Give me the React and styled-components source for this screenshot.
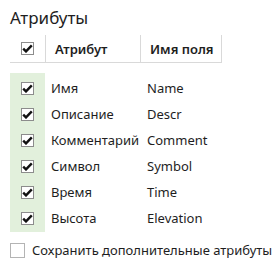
import React from "react";
import styled, { createGlobalStyle } from "styled-components";

const GlobalStyle = createGlobalStyle`
  body {
    margin: 0;
    background: #fff;
    font-family: "Noto Sans", "Open Sans", sans-serif;
    color: #1e1e1e;
  }
`;

const Panel = styled.div`
  width: 275px;
  height: 266px;
  padding: 0 10px;
  box-sizing: border-box;
`;

const Title = styled.h1`
  margin: 0;
  padding-top: 7px;
  height: 35px;
  box-sizing: border-box;
  font-size: 17px;
  font-weight: 400;
  line-height: 22px;
`;

const Grid = styled.div`
  display: grid;
  grid-template-columns: 35px 95px 82px;
`;

const HeadCell = styled.div`
  height: 27px;
  display: flex;
  align-items: center;
  justify-content: ${(p) => (p.center ? "center" : "flex-start")};
  padding-left: ${(p) => (p.center ? "0" : "9px")};
  border-bottom: 1px solid #d9d9d9;
  border-left: ${(p) => (p.divider ? "1px solid #d9d9d9" : "none")};
  border-right: ${(p) => (p.last ? "1px solid #d9d9d9" : "none")};
  font-size: 13px;
  font-weight: 600;
`;

const Body = styled.div`
  display: grid;
  grid-template-columns: 35px 95px 82px;
  margin-top: 10px;
`;

const CheckCell = styled.div`
  background: #e2f0dc;
  height: 26px;
  display: flex;
  align-items: center;
  justify-content: center;
  padding-top: ${(p) => (p.first ? "2px" : "0")};
  padding-bottom: ${(p) => (p.last ? "1px" : "0")};
`;

const Cell = styled.div`
  height: 26px;
  display: flex;
  align-items: center;
  padding-left: ${(p) => p.pad}px;
  padding-top: ${(p) => (p.first ? "2px" : "0")};
  font-size: 13px;
  white-space: nowrap;
`;

const Box = styled.span`
  width: 13px;
  height: 13px;
  box-sizing: border-box;
  border: 1px solid #8c8c8c;
  background: #fff;
  display: inline-flex;
  align-items: center;
  justify-content: center;
  flex-shrink: 0;
`;

const Footer = styled.label`
  display: flex;
  align-items: center;
  gap: 7px;
  margin-top: 9px;
  font-size: 13px;
  white-space: nowrap;
`;

const BigBox = styled(Box)`
  width: 15px;
  height: 15px;
  border-color: #b4b4b4;
`;

const Check = () => (
  <svg width="11" height="9" viewBox="0 0 11 9">
    <path d="M1.2 4.6 L4 7.4 L9.8 1.4" fill="none" stroke="#111" strokeWidth="2.4" />
  </svg>
);

const rows = [
  ["Имя", "Name"],
  ["Описание", "Descr"],
  ["Комментарий", "Comment"],
  ["Символ", "Symbol"],
  ["Время", "Time"],
  ["Высота", "Elevation"],
];

export default function App() {
  return (
    <>
      <GlobalStyle />
      <Panel>
        <Title>Атрибуты</Title>
        <Grid>
          <HeadCell center>
            <Box>
              <Check />
            </Box>
          </HeadCell>
          <HeadCell divider>Атрибут</HeadCell>
          <HeadCell divider last>Имя поля</HeadCell>
        </Grid>
        <Body>
          {rows.map(([name, field], i) => (
            <React.Fragment key={name}>
              <CheckCell first={i === 0} last={i === rows.length - 1}>
                <Box>
                  <Check />
                </Box>
              </CheckCell>
              <Cell pad={6} first={i === 0}>{name}</Cell>
              <Cell pad={7} first={i === 0}>{field}</Cell>
            </React.Fragment>
          ))}
        </Body>
        <Footer>
          <BigBox />
          Сохранить дополнительные атрибуты
        </Footer>
      </Panel>
    </>
  );
}
